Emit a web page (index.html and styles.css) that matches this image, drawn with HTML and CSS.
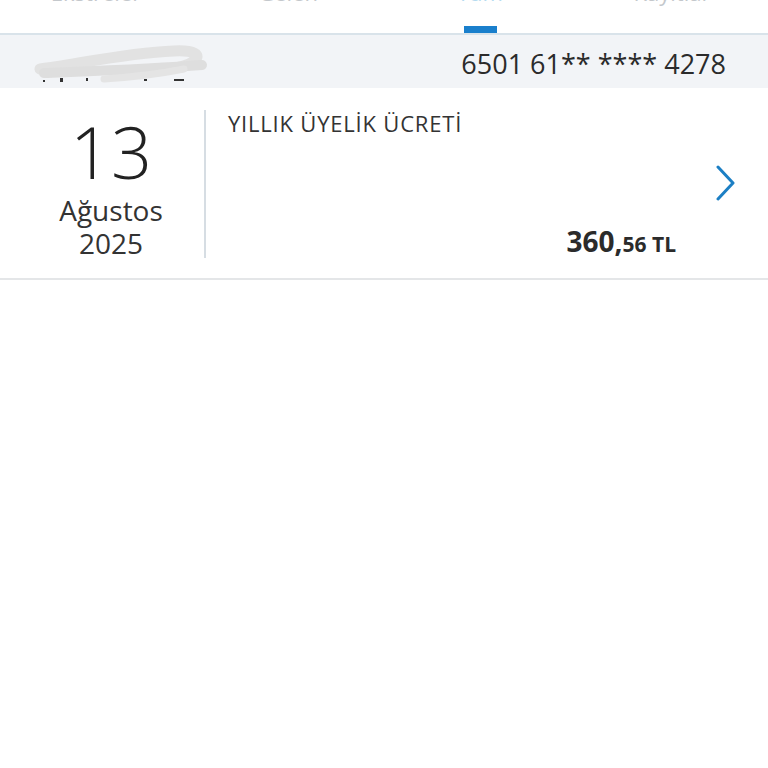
FILE: index.html
```html
<!DOCTYPE html>
<html lang="tr">
<head>
<meta charset="utf-8">
<link rel="stylesheet" href="styles.css">
</head>
<body>
<div class="tabs">
  <div class="tab"><span class="tab-label">Ekstreler</span></div>
  <div class="tab"><span class="tab-label">Gelen</span></div>
  <div class="tab active"><span class="tab-label">Tüm</span><span class="indicator"></span></div>
  <div class="tab"><span class="tab-label">Kayıtlar</span></div>
</div>
<div class="card-bar">
  <div class="name">
    <svg class="scribble" width="176" height="42" viewBox="0 0 176 42">
      <g fill="none" stroke-linecap="round" stroke-linejoin="round">
        <path d="M6 26 C40 22 90 10 140 8 C160 7 168 12 160 18 C150 26 110 30 80 32" stroke="#e2e2e2" stroke-width="11"/>
        <path d="M10 30 C60 28 120 26 168 22" stroke="#dedede" stroke-width="10"/>
        <path d="M70 36 C100 34 130 30 150 26" stroke="#e4e4e4" stroke-width="7"/>
      </g>
      <g fill="#333">
        <rect x="9" y="37" width="2" height="2"/>
        <rect x="26" y="35" width="3" height="4"/>
        <rect x="52" y="35" width="2" height="3"/>
        <rect x="110" y="36" width="3" height="2"/>
        <rect x="140" y="36" width="10" height="2"/>
      </g>
    </svg>
  </div>
  <div class="card-no">6501 61** **** 4278</div>
</div>
<div class="row">
  <div class="date">
    <div class="day">13</div>
    <div class="month">Ağustos</div>
    <div class="year">2025</div>
  </div>
  <div class="main">
    <div class="desc">YILLIK ÜYELİK ÜCRETİ</div>
    <div class="amount"><span class="int">360,</span><span class="dec">56 TL</span></div>
  </div>
  <div class="chev">
    <svg width="22" height="36" viewBox="0 0 22 36">
      <path d="M3 2 L18 18 L3 34" fill="none" stroke="#1c7fc4" stroke-width="3" stroke-linecap="round" stroke-linejoin="round"/>
    </svg>
  </div>
</div>
</body>
</html>
```
FILE: styles.css
```css
* { box-sizing: border-box; }
html, body { margin: 0; padding: 0; background: #fff; }
body {
  font-family: "Open Sans", "Noto Sans", sans-serif;
  color: #2b2b2b;
  width: 768px;
  height: 768px;
  overflow: hidden;
}
.tabs {
  display: flex;
  height: 35px;
  border-bottom: 2px solid #d9e3ea;
}
.tab {
  flex: 1;
  display: flex;
  flex-direction: column;
  align-items: center;
  position: relative;
}
.tab-label {
  font-size: 22px;
  line-height: 22px;
  margin-top: -19px;
  color: #c4c8cc;
}
.tab.active .tab-label { color: #b5dbf0; }
.indicator {
  position: absolute;
  top: 26px;
  width: 33px;
  height: 7px;
  background: #1a7fcc;
}
.card-bar {
  display: flex;
  justify-content: space-between;
  align-items: center;
  height: 53px;
  background: #f2f4f7;
  padding: 0 42px 0 34px;
}
.scribble { display: block; margin-top: 4px; }
.card-no {
  font-size: 27px;
  line-height: 53px;
  padding-top: 4px;
  color: #2b2b2b;
}
.row {
  display: flex;
  height: 192px;
  border-bottom: 2px solid #e4e6e8;
}
.date {
  width: 188px;
  margin: 22px 0 20px 18px;
  border-right: 2px solid #d6dde3;
  display: flex;
  flex-direction: column;
  align-items: center;
  padding-top: 5px;
}
.day {
  font-size: 72px;
  font-weight: 300;
  line-height: 72px;
  color: #222;
}
.month, .year {
  font-size: 28px;
  line-height: 33px;
  color: #333;
}
.month { margin-top: 7px; }
.main {
  flex: 1;
  display: flex;
  flex-direction: column;
  justify-content: space-between;
  padding: 20px 0 15px 22px;
}
.desc {
  font-size: 22px;
  line-height: 30px;
  letter-spacing: 0.8px;
  color: #333;
}
.amount {
  align-self: flex-end;
  line-height: 34px;
  font-weight: 700;
  color: #2b2b2b;
}
.amount .int { font-size: 28px; }
.amount .dec { font-size: 21px; }
.chev {
  width: 92px;
  display: flex;
  align-items: center;
  justify-content: flex-end;
  padding-right: 31px;
}
.chev svg { display: block; }
```
